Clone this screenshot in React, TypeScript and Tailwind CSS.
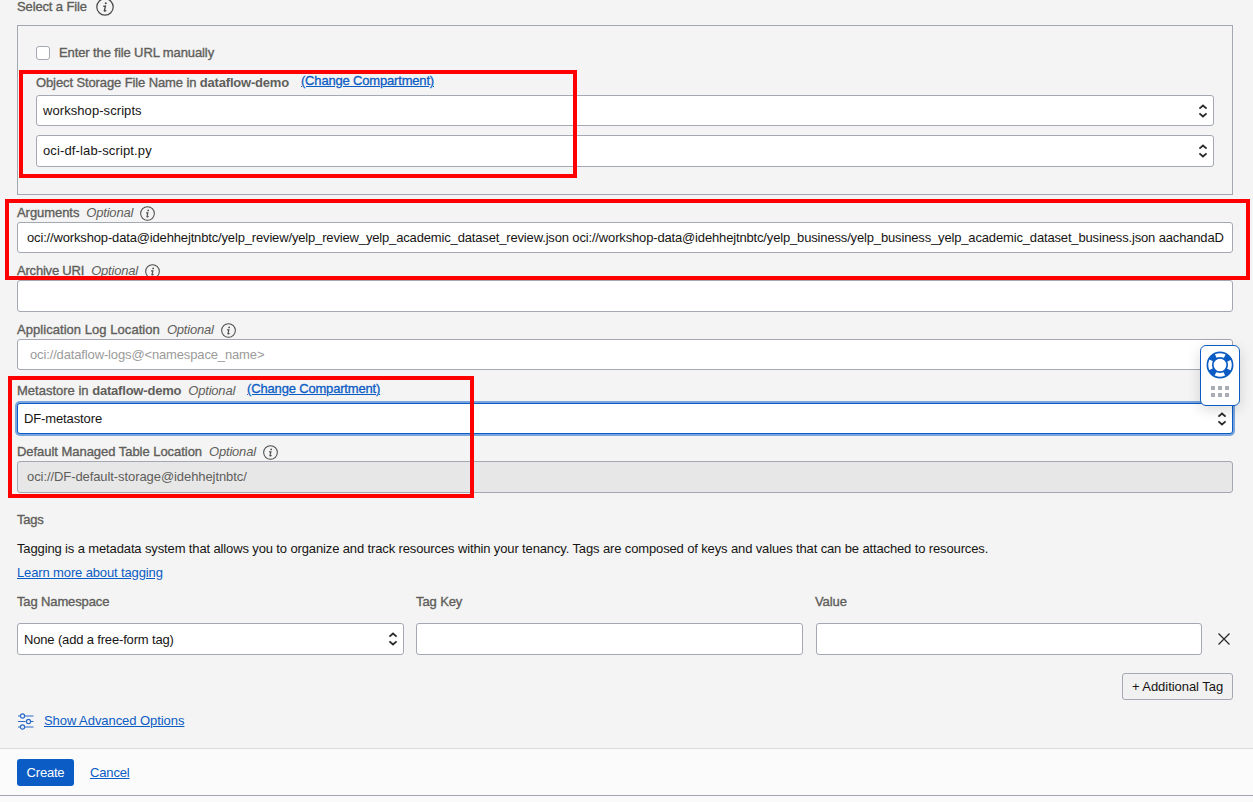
import React from "react";

const label = "text-[#5f5e5b] [-webkit-text-stroke:0.35px_#5f5e5b]";
const link = "text-[#0b5cc4] underline underline-offset-1";
const changeLink = "tracking-[-0.175px] [-webkit-text-stroke:0.3px_#0b5cc4]";

function Info({ size = 15 }: { size?: number }) {
  return (
    <svg width={size} height={size} viewBox="0 0 16 16" fill="none" stroke="#4a4a48" className="shrink-0">
      <circle cx="8" cy="8" r="7.3" strokeWidth="1.1" />
      <circle cx="8.7" cy="4.7" r="0.9" fill="#4a4a48" stroke="none" />
      <path d="M6.5 7.3h1.9L7.4 11.2c-.1.6.6.6 1.7-.3" strokeWidth="1.2" />
    </svg>
  );
}

function Chevrons() {
  return (
    <svg width="10" height="14" viewBox="0 0 10 14" fill="none" stroke="#2b2b2b" strokeWidth="1.8" className="shrink-0">
      <path d="M1.4 4.7 5 1.5l3.6 3.2M1.4 9.3 5 12.5l3.6-3.2" />
    </svg>
  );
}

function Select({ children, className = "" }: { children: React.ReactNode; className?: string }) {
  return (
    <div className={`flex items-center justify-between rounded-[3px] border border-[#a3a8b2] bg-white pr-[5px] pl-[6px] ${className}`}>
      {children}
      <Chevrons />
    </div>
  );
}

function Optional() {
  return <span className="ml-[7px] tracking-[-0.2px] text-[#5f5e5b] italic">Optional</span>;
}

function HelpWidget() {
  return (
    <div className="absolute top-[345px] left-[1200px] flex h-[61px] w-10 flex-col items-center rounded-[6px] border border-[#0b5cc4] bg-white pt-[5px] shadow-[0_4px_14px_rgba(0,0,0,0.14)]">
      <svg width="28" height="28" viewBox="0 0 28 28" fill="none">
        <circle cx="14" cy="14" r="10" stroke="#fff" strokeWidth="6" />
        <circle cx="14" cy="14" r="10" stroke="#0b5cc4" strokeWidth="6" strokeDasharray="6.4 9.308" strokeDashoffset="-4.654" />
        <circle cx="14" cy="14" r="12.6" stroke="#0b5cc4" strokeWidth="1.7" />
        <circle cx="14" cy="14" r="7.2" stroke="#0b5cc4" strokeWidth="1.7" />
      </svg>
      <div className="mt-[7px] grid grid-cols-3 gap-x-[3px] gap-y-[3px]">
        {[0, 1, 2, 3, 4, 5].map((i) => (
          <span key={i} className="h-1 w-1 bg-[#a9adb5]" />
        ))}
      </div>
    </div>
  );
}

export default function App() {
  return (
    <div className="relative flex h-[802px] w-[1253px] flex-col overflow-hidden bg-[#f4f4f4] font-['Liberation_Sans',Arial,sans-serif] text-[13px] leading-4 whitespace-nowrap text-[#161513]">
      <main className="flex h-[748px] flex-col pr-5 pl-[17px]">
        <div className="flex h-[25px] items-start">
          <span className={`mt-[-1px] tracking-[-0.13px] ${label}`}>Select a File</span>
          <span className="mt-[-2px] ml-[9px]"><Info size={18} /></span>
        </div>

        <section className="flex h-[170px] flex-col border border-[#a3a8b2] px-[18px]">
          <div className="mt-[19px] flex h-4 items-center">
            <span className="h-[14px] w-[14px] rounded-[3px] border border-[#a3a8b2] bg-white" />
            <span className={`ml-[9px] tracking-[-0.1px] ${label}`}>Enter the file URL manually</span>
          </div>
          <div className="mt-[11px] flex h-[23px] items-start">
            <span className={`mt-[3px] tracking-[-0.11px] ${label}`}>
              Object Storage File Name in <b className="tracking-[-0.2px] [-webkit-text-stroke:0px]">dataflow-demo</b>
            </span>
            <span className={`mt-px ml-3 ${link} ${changeLink}`}>(Change Compartment)</span>
          </div>
          <Select className="h-[31px] tracking-[0.07px]">workshop-scripts</Select>
          <Select className="mt-[9px] h-8 tracking-[0.13px]">oci-df-lab-script.py</Select>
        </section>

        <div className="flex h-[27px] items-center pt-[9px]">
          <span className={`tracking-[-0.06px] ${label}`}>Arguments</span>
          <Optional />
          <span className="ml-[7px]"><Info /></span>
        </div>
        <div className="flex h-[31px] items-center overflow-hidden rounded-[3px] border border-[#a3a8b2] bg-white pl-[9px]">
          <span className="tracking-[-0.156px]">oci://workshop-data@idehhejtnbtc/yelp_review/yelp_review_yelp_academic_dataset_review.json oci://workshop-data@idehhejtnbtc/yelp_business/yelp_business_yelp_academic_dataset_business.json aachandaD</span>
        </div>

        <div className="flex h-[27px] items-center pt-[9px]">
          <span className={`tracking-[-0.2px] ${label}`}>Archive URI</span>
          <Optional />
          <span className="ml-[7px]"><Info /></span>
        </div>
        <div className="h-8 rounded-[3px] border border-[#a3a8b2] bg-white" />

        <div className="flex h-[27px] items-center pt-[9px]">
          <span className={`tracking-[0.05px] ${label}`}>Application Log Location</span>
          <Optional />
          <span className="ml-[7px]"><Info /></span>
        </div>
        <div className="flex h-[31px] items-center rounded-[3px] border border-[#a3a8b2] bg-white pl-3 tracking-[-0.14px] text-[#9b9b9b]">
          oci://dataflow-logs@&lt;namespace_name&gt;
        </div>

        <div className="flex h-[33px] items-start pt-[13px]">
          <span className={label}>
            Metastore in <b className="tracking-[-0.2px] [-webkit-text-stroke:0px]">dataflow-demo</b>
          </span>
          <Optional />
          <span className={`-mt-0.5 ml-3 ${link} ${changeLink}`}>(Change Compartment)</span>
        </div>
        <div className="flex h-[31px] items-center justify-between rounded-[3px] border border-[#0b5cc4] bg-white pr-[5px] pl-[6px] tracking-[-0.12px] shadow-[0_0_0_2px_#79a4de]">
          DF-metastore
          <Chevrons />
        </div>

        <div className="flex h-[27px] items-center pt-[9px]">
          <span className={`tracking-[-0.04px] ${label}`}>Default Managed Table Location</span>
          <Optional />
          <span className="ml-[7px]"><Info /></span>
        </div>
        <div className="flex h-8 items-center rounded-[3px] border border-[#a3a8b2] bg-[#e7e7e7] pl-[9px] tracking-[-0.08px] text-[#5f5e5b]">
          oci://DF-default-storage@idehhejtnbtc/
        </div>

        <div className="mt-[19px]"><span className={`tracking-[-0.2px] ${label}`}>Tags</span></div>
        <p className="mt-[13px] tracking-[-0.13px]">
          Tagging is a metadata system that allows you to organize and track resources within your tenancy. Tags are composed of keys and values that can be attached to resources.
        </p>
        <div className="mt-2"><a className={`tracking-[-0.13px] ${link}`}>Learn more about tagging</a></div>

        <div className="mt-[13px] flex gap-3">
          <div className="w-[387px]">
            <div className={`tracking-[-0.13px] ${label}`}>Tag Namespace</div>
            <Select className="mt-[13px] h-8 tracking-[-0.16px]"><span className="pt-px">None (add a free-form tag)</span></Select>
          </div>
          <div className="w-[387px]">
            <div className={`tracking-[-0.1px] ${label}`}>Tag Key</div>
            <div className="mt-[13px] h-8 rounded-[3px] border border-[#a3a8b2] bg-white" />
          </div>
          <div className="ml-px w-[386px]">
            <div className={`-ml-px tracking-[-0.1px] ${label}`}>Value</div>
            <div className="mt-[13px] h-8 rounded-[3px] border border-[#a3a8b2] bg-white" />
          </div>
          <svg width="12" height="12" viewBox="0 0 12 12" stroke="#2b2b2b" strokeWidth="1.3" className="mt-[39px] ml-1 shrink-0">
            <path d="m.5.5 11 11M11.5.5l-11 11" />
          </svg>
        </div>

        <button className="mt-[18px] h-[27px] w-[111px] self-end rounded-[3px] border border-[#a3a8b2] bg-[#f1f1f1] tracking-[-0.05px]">
          + Additional Tag
        </button>

        <div className="mt-[13px] flex h-4 items-center">
          <svg width="17" height="17" viewBox="0 0 17 17" fill="none" stroke="#2a6cc8" strokeWidth="1.2">
            <path d="M1 3H3M8 3h8.5M1 8.5h7.5M13.5 8.5h3M1 14H3M8 14h8.5" />
            <circle cx="5.5" cy="3" r="2.1" />
            <circle cx="11.5" cy="8.5" r="2.1" />
            <circle cx="5.5" cy="14" r="2.1" />
          </svg>
          <a className={`ml-[10px] tracking-[-0.06px] ${link}`}>Show Advanced Options</a>
        </div>
      </main>

      <footer className="flex h-[48px] items-start border-t border-b border-t-[#dcdcdc] border-b-[#a3a5b0] bg-[#fbfbfb] pt-[10px] pl-[17px]">
        <button className="h-[27px] w-[57px] rounded-[3px] bg-[#0b5cc4] tracking-[-0.2px] text-white">Create</button>
        <a className={`mt-[6px] ml-4 tracking-[-0.15px] ${link}`}>Cancel</a>
      </footer>
      <div className="h-[6px] bg-[#fafafa]" />

      <HelpWidget />
      <div className="absolute top-[70px] left-[19px] h-[108px] w-[558px] border-4 border-[#ff0000]" />
      <div className="absolute top-[199px] left-[5px] h-[81px] w-[1245px] border-4 border-[#ff0000]" />
      <div className="absolute top-[376px] left-[8px] h-[122px] w-[466px] border-4 border-[#ff0000]" />
    </div>
  );
}
